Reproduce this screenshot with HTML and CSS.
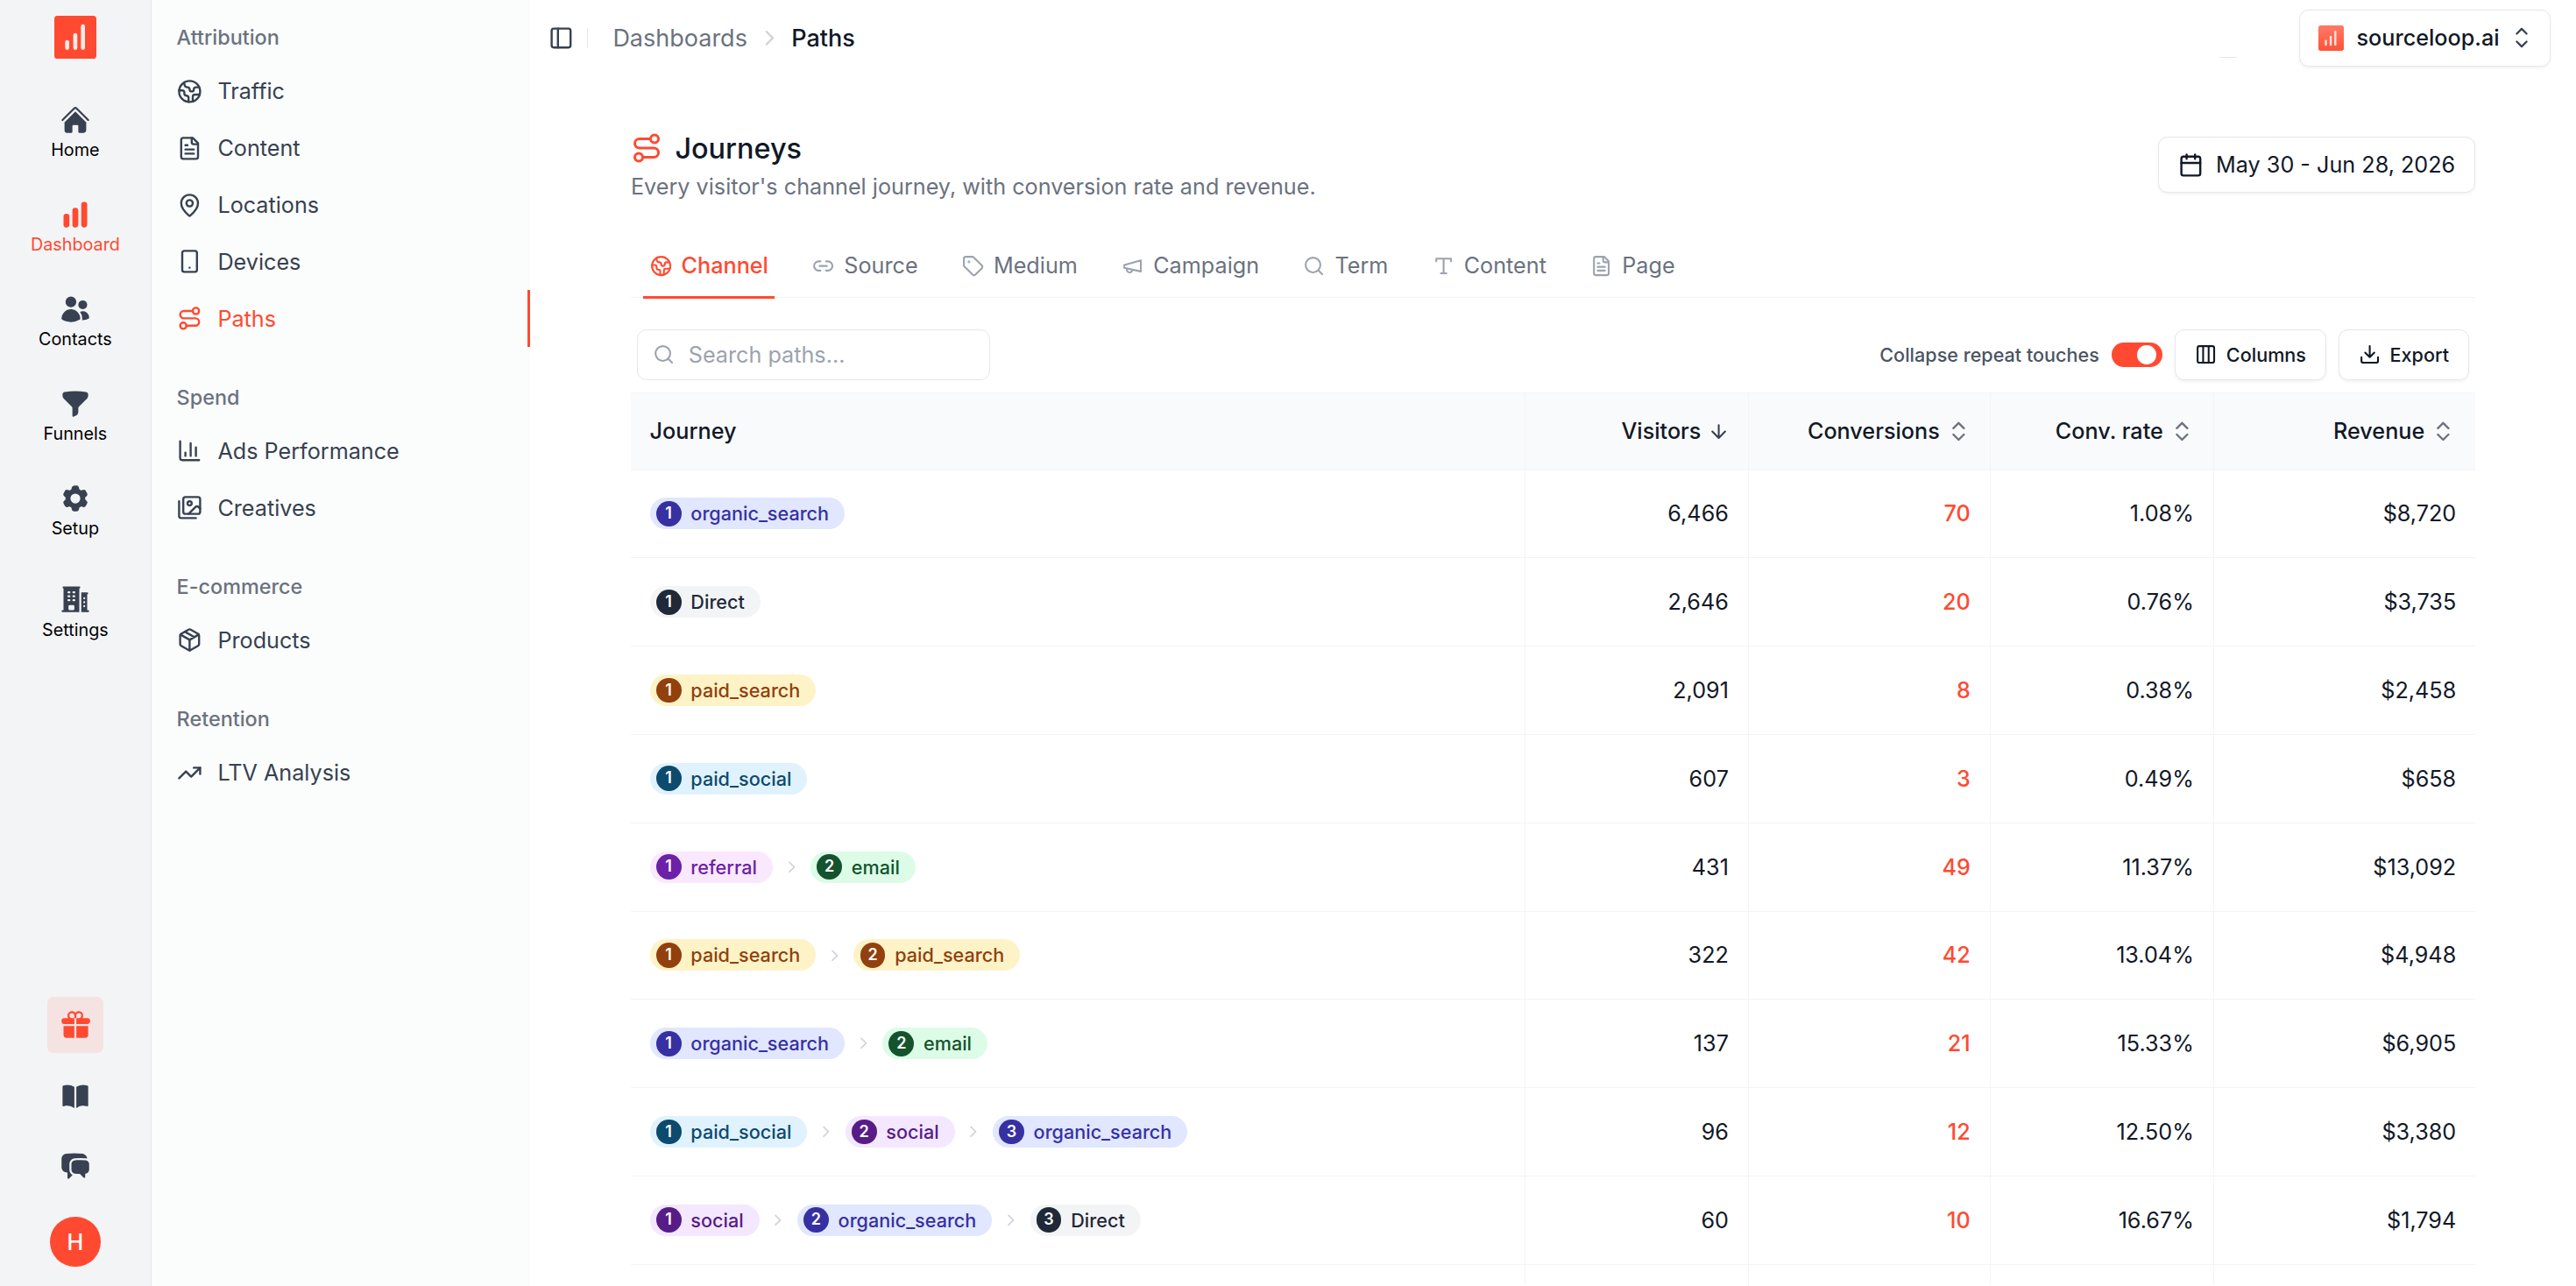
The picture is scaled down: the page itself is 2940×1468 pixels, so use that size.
FILE: index.html
```html
<!DOCTYPE html>
<html lang="en">
<head>
<meta charset="utf-8">
<title>Journeys</title>
<link rel="stylesheet" href="styles.css">
</head>
<body>
<svg class="sprite" aria-hidden="true">
  <symbol id="bars" viewBox="0 0 24 24"><path d="M18.375 2.25c-1.035 0-1.875.84-1.875 1.875v15.75c0 1.035.84 1.875 1.875 1.875h.75c1.035 0 1.875-.84 1.875-1.875V4.125c0-1.036-.84-1.875-1.875-1.875h-.75ZM9.75 8.625c0-1.036.84-1.875 1.875-1.875h.75c1.036 0 1.875.84 1.875 1.875v11.25c0 1.035-.84 1.875-1.875 1.875h-.75a1.875 1.875 0 0 1-1.875-1.875V8.625ZM3 13.125c0-1.036.84-1.875 1.875-1.875h.75c1.036 0 1.875.84 1.875 1.875v6.75c0 1.035-.84 1.875-1.875 1.875h-.75A1.875 1.875 0 0 1 3 19.875v-6.75Z"/></symbol>
  <symbol id="home" viewBox="0 0 24 24"><path d="M11.47 3.841a.75.75 0 0 1 1.06 0l8.69 8.69a.75.75 0 1 0 1.06-1.061l-8.689-8.69a2.25 2.25 0 0 0-3.182 0l-8.69 8.69a.75.75 0 1 0 1.061 1.06l8.69-8.689Z"/><path d="m12 5.432 8.159 8.159c.03.03.06.058.091.086v6.198c0 1.035-.84 1.875-1.875 1.875H15a.75.75 0 0 1-.75-.75v-4.5a.75.75 0 0 0-.75-.75h-3a.75.75 0 0 0-.75.75V21a.75.75 0 0 1-.75.75H5.625a1.875 1.875 0 0 1-1.875-1.875v-6.198a2.29 2.29 0 0 0 .091-.086L12 5.432Z"/></symbol>
  <symbol id="users" viewBox="0 0 24 24"><path d="M4.500 6.375a4.125 4.125 0 1 1 8.250 0 4.125 4.125 0 0 1-8.250 0ZM14.250 8.625a3.375 3.375 0 1 1 6.750 0 3.375 3.375 0 0 1-6.750 0ZM1.500 19.125a7.125 7.125 0 0 1 14.250 0v.003l-.001.119a.75.75 0 0 1-.363.630 13.067 13.067 0 0 1-6.761 1.873c-2.472 0-4.786-.684-6.760-1.873a.75.75 0 0 1-.364-.630l-.001-.122ZM17.250 19.128l-.001.144a2.250 2.250 0 0 1-.233.960 10.088 10.088 0 0 0 5.060-1.010.75.75 0 0 0 .420-.643 4.875 4.875 0 0 0-6.957-4.611 8.586 8.586 0 0 1 1.710 5.157v.003Z"/></symbol>
  <symbol id="funnel" viewBox="0 0 24 24"><path fill-rule="evenodd" d="M3.792 2.938A49.069 49.069 0 0 1 12 2.250c2.797 0 5.540.236 8.209.688a1.857 1.857 0 0 1 1.541 1.836v1.044a3 3 0 0 1-.879 2.121l-6.182 6.182a1.500 1.500 0 0 0-.439 1.061v2.927a3 3 0 0 1-1.658 2.684l-1.757.878A.75.75 0 0 1 9.750 21v-5.818a1.500 1.500 0 0 0-.440-1.060L3.130 7.938a3 3 0 0 1-.879-2.121V4.774c0-.897.640-1.683 1.542-1.836Z"/></symbol>
  <symbol id="cog" viewBox="0 0 24 24"><path fill-rule="evenodd" d="M11.078 2.250c-.917 0-1.699.663-1.850 1.567L9.050 4.889c-.020.120-.115.260-.297.348a7.493 7.493 0 0 0-.986.570c-.166.115-.334.126-.450.083L6.300 5.508a1.875 1.875 0 0 0-2.282.819l-.922 1.597a1.875 1.875 0 0 0 .432 2.385l.840.692c.095.078.170.229.154.430a7.598 7.598 0 0 0 0 1.139c.015.200-.059.352-.153.430l-.841.692a1.875 1.875 0 0 0-.432 2.385l.922 1.597a1.875 1.875 0 0 0 2.282.818l1.019-.382c.115-.043.283-.031.450.082.312.214.641.405.985.570.182.088.277.228.297.350l.178 1.071c.151.904.933 1.567 1.850 1.567h1.844c.916 0 1.699-.663 1.850-1.567l.178-1.072c.020-.120.114-.260.297-.349.344-.165.673-.356.985-.570.167-.114.335-.125.450-.082l1.020.382a1.875 1.875 0 0 0 2.280-.819l.923-1.597a1.875 1.875 0 0 0-.432-2.385l-.840-.692c-.095-.078-.170-.229-.154-.430a7.614 7.614 0 0 0 0-1.139c-.016-.200.059-.352.153-.430l.840-.692c.708-.582.891-1.590.433-2.385l-.922-1.597a1.875 1.875 0 0 0-2.282-.818l-1.020.382c-.114.043-.282.031-.449-.083a7.490 7.490 0 0 0-.985-.570c-.183-.087-.277-.227-.297-.348l-.179-1.072a1.875 1.875 0 0 0-1.850-1.567h-1.843ZM12 15.750a3.750 3.750 0 1 0 0-7.500 3.750 3.750 0 0 0 0 7.500Z"/></symbol>
  <symbol id="building" viewBox="0 0 24 24"><path fill-rule="evenodd" d="M3 2.250a.75.75 0 0 0 0 1.500v16.500h-.75a.75.75 0 0 0 0 1.500H15v-18a.75.75 0 0 0 0-1.500H3ZM6.750 19.500v-2.250a.75.75 0 0 1 .75-.75h3a.75.75 0 0 1 .75.75v2.250a.75.75 0 0 1-.75.75h-3a.75.75 0 0 1-.75-.75ZM6 6.750A.75.75 0 0 1 6.750 6h.75a.75.75 0 0 1 0 1.500h-.75A.75.75 0 0 1 6 6.750ZM6.750 9a.75.75 0 0 0 0 1.500h.75a.75.75 0 0 0 0-1.500h-.75ZM6 12.750a.75.75 0 0 1 .75-.75h.75a.75.75 0 0 1 0 1.500h-.75a.75.75 0 0 1-.75-.75ZM10.500 6a.75.75 0 0 0 0 1.500h.75a.75.75 0 0 0 0-1.500h-.75Zm-.75 3.750A.75.75 0 0 1 10.500 9h.75a.75.75 0 0 1 0 1.500h-.75a.75.75 0 0 1-.75-.75ZM10.500 12a.75.75 0 0 0 0 1.500h.75a.75.75 0 0 0 0-1.500h-.75ZM16.500 6.750v15h5.250a.75.75 0 0 0 0-1.500H21v-12a.75.75 0 0 0 0-1.500h-4.500Zm1.500 4.500a.75.75 0 0 1 .75-.75h.008a.75.75 0 0 1 .75.75v.008a.75.75 0 0 1-.75.75h-.008a.75.75 0 0 1-.75-.75v-.008Zm.75 2.250a.75.75 0 0 0-.75.75v.008c0 .414.336.75.75.75h.008a.75.75 0 0 0 .75-.75v-.008a.75.75 0 0 0-.75-.75h-.008ZM18 17.250a.75.75 0 0 1 .75-.75h.008a.75.75 0 0 1 .75.75v.008a.75.75 0 0 1-.75.75h-.008a.75.75 0 0 1-.75-.75v-.008Z"/></symbol>
  <symbol id="gift" viewBox="0 0 24 24"><path d="M9.375 3a1.875 1.875 0 0 0 0 3.750h1.875v4.500H3.375A1.875 1.875 0 0 1 1.500 9.375v-.75c0-1.036.840-1.875 1.875-1.875h3.193A3.375 3.375 0 0 1 12 2.753a3.375 3.375 0 0 1 5.432 3.997h3.943c1.035 0 1.875.840 1.875 1.875v.75c0 1.036-.840 1.875-1.875 1.875H12.750v-4.500h1.875a1.875 1.875 0 1 0-1.875-1.875V6.750h-1.500V4.875C11.250 3.839 10.410 3 9.375 3ZM11.250 12.750H3v6.750a2.250 2.250 0 0 0 2.250 2.250h6v-9ZM12.750 12.750v9h6.750a2.250 2.250 0 0 0 2.250-2.250v-6.750h-9Z"/></symbol>
  <symbol id="book" viewBox="0 0 24 24"><path d="M11.250 4.533A9.707 9.707 0 0 0 6 3a9.735 9.735 0 0 0-3.250.555.75.75 0 0 0-.500.707v14.250a.75.75 0 0 0 1 .707A8.237 8.237 0 0 1 6 18.750c1.995 0 3.823.707 5.250 1.886V4.533ZM12.750 20.636A8.214 8.214 0 0 1 18 18.750c.966 0 1.890.166 2.750.470a.75.75 0 0 0 1-.708V4.262a.75.75 0 0 0-.500-.707A9.735 9.735 0 0 0 18 3a9.707 9.707 0 0 0-5.250 1.533v16.103Z"/></symbol>
  <symbol id="chat" viewBox="0 0 24 24"><path d="M4.913 2.658c2.075-.27 4.19-.408 6.337-.408 2.147 0 4.262.139 6.337.408 1.922.25 3.291 1.861 3.405 3.727a4.403 4.403 0 0 0-1.032-.211 50.89 50.89 0 0 0-8.42 0c-2.358.196-4.04 2.19-4.04 4.434v4.286a4.47 4.47 0 0 0 2.433 3.984L7.28 21.53A.75.75 0 0 1 6 21v-4.03a48.527 48.527 0 0 1-1.087-.128C2.905 16.58 1.5 14.833 1.5 12.862V6.638c0-1.97 1.405-3.718 3.413-3.979Z"/><path d="M15.75 7.5c-1.376 0-2.739.057-4.086.169C10.124 7.797 9 9.103 9 10.609v4.285c0 1.507 1.128 2.814 2.67 2.94 1.243.102 2.5.157 3.768.165l2.782 2.781a.75.75 0 0 0 1.28-.53v-2.39l.33-.026c1.542-.125 2.67-1.433 2.67-2.94v-4.286c0-1.505-1.125-2.811-2.664-2.94A49.392 49.392 0 0 0 15.75 7.5Z"/></symbol>
  <symbol id="earth" viewBox="0 0 24 24"><g class="ln"><path d="M21.540 15H17a2 2 0 0 0-2 2v4.540"/><path d="M7 3.340V5a3 3 0 0 0 3 3a2 2 0 0 1 2 2c0 1.100.9 2 2 2a2 2 0 0 0 2-2c0-1.100.9-2 2-2h3.170"/><path d="M11 21.950V18a2 2 0 0 0-2-2a2 2 0 0 1-2-2v-1a2 2 0 0 0-2-2H2.050"/><circle cx="12" cy="12" r="10"/></g></symbol>
  <symbol id="file" viewBox="0 0 24 24"><g class="ln"><path d="M15 2H6a2 2 0 0 0-2 2v16a2 2 0 0 0 2 2h12a2 2 0 0 0 2-2V7Z"/><path d="M14 2v4a2 2 0 0 0 2 2h4M10 9H8M16 13H8M16 17H8"/></g></symbol>
  <symbol id="pin" viewBox="0 0 24 24"><g class="ln"><path d="M20 10c0 4.993-5.539 10.193-7.399 11.799a1 1 0 0 1-1.202 0C9.539 20.193 4 14.993 4 10a8 8 0 0 1 16 0"/><circle cx="12" cy="10" r="3"/></g></symbol>
  <symbol id="device" viewBox="0 0 24 24"><g class="ln"><rect x="5" y="2" width="14" height="20" rx="2"/><path d="M12 18h.01"/></g></symbol>
  <symbol id="route" viewBox="0 0 24 24"><g class="ln"><circle cx="6" cy="19" r="3"/><path d="M9 19h8.500a3.500 3.500 0 0 0 0-7h-11a3.500 3.500 0 0 1 0-7H15"/><circle cx="18" cy="5" r="3"/></g></symbol>
  <symbol id="chart" viewBox="0 0 24 24"><g class="ln"><path d="M3 3v16a2 2 0 0 0 2 2h16M18 17V9M13 17V5M8 17v-3"/></g></symbol>
  <symbol id="images" viewBox="0 0 24 24"><g class="ln"><path d="M18 22H4a2 2 0 0 1-2-2V6"/><path d="m22 13-1.296-1.296a2.410 2.410 0 0 0-3.408 0L11 18"/><circle cx="12" cy="8" r="2"/><rect width="16" height="16" x="6" y="2" rx="2"/></g></symbol>
  <symbol id="package" viewBox="0 0 24 24"><g class="ln"><path d="M11 21.730a2 2 0 0 0 2 0l7-4A2 2 0 0 0 21 16V8a2 2 0 0 0-1-1.730l-7-4a2 2 0 0 0-2 0l-7 4A2 2 0 0 0 3 8v8a2 2 0 0 0 1 1.730z"/><path d="M12 22V12"/><path d="M3.290 7 12 12l8.710-5M7.500 4.270l9 5.150"/></g></symbol>
  <symbol id="trend" viewBox="0 0 24 24"><g class="ln"><path d="M16 7h6v6"/><path d="m22 7-8.500 8.500-5-5L2 17"/></g></symbol>
  <symbol id="panel" viewBox="0 0 24 24"><g class="ln"><rect width="18" height="18" x="3" y="3" rx="2"/><path d="M9 3v18"/></g></symbol>
  <symbol id="right" viewBox="0 0 24 24"><g class="ln"><path d="m9 18 6-6-6-6"/></g></symbol>
  <symbol id="select" viewBox="0 0 24 24"><g class="ln"><path d="M8.250 15 12 18.750 15.750 15M8.250 9 12 5.250 15.750 9"/></g></symbol>
  <symbol id="sort" viewBox="0 0 24 24"><g class="ln"><path d="m7 15 5 5 5-5M7 9l5-5 5 5"/></g></symbol>
  <symbol id="down" viewBox="0 0 24 24"><g class="ln"><path d="M12 5v14M19 12l-7 7-7-7"/></g></symbol>
  <symbol id="calendar" viewBox="0 0 24 24"><g class="ln"><path d="M8 2v4M16 2v4"/><rect width="18" height="18" x="3" y="4" rx="2"/><path d="M3 10h18"/></g></symbol>
  <symbol id="link" viewBox="0 0 24 24"><g class="ln"><path d="M9 17H7A5 5 0 0 1 7 7h2M15 7h2a5 5 0 1 1 0 10h-2M8 12h8"/></g></symbol>
  <symbol id="tag" viewBox="0 0 24 24"><g class="ln"><path d="M12.586 2.586A2 2 0 0 0 11.172 2H4a2 2 0 0 0-2 2v7.172a2 2 0 0 0 .586 1.414l8.704 8.704a2.426 2.426 0 0 0 3.420 0l6.580-6.580a2.426 2.426 0 0 0 0-3.420z"/><circle cx="7.500" cy="7.500" r=".5" fill="currentColor"/></g></symbol>
  <symbol id="megaphone" viewBox="0 0 24 24"><g class="ln"><path d="m3 11 18-5v12L3 14v-3zM11.600 16.800a3 3 0 1 1-5.800-1.600"/></g></symbol>
  <symbol id="search" viewBox="0 0 24 24"><g class="ln"><circle cx="11" cy="11" r="8"/><path d="m21 21-4.300-4.300"/></g></symbol>
  <symbol id="type" viewBox="0 0 24 24"><g class="ln"><path d="M4 7V4h16v3M9 20h6M12 4v16"/></g></symbol>
  <symbol id="columns" viewBox="0 0 24 24"><g class="ln"><rect width="18" height="18" x="3" y="3" rx="2"/><path d="M9 3v18M15 3v18"/></g></symbol>
  <symbol id="download" viewBox="0 0 24 24"><g class="ln"><path d="M12 15V3M21 15v4a2 2 0 0 1-2 2H5a2 2 0 0 1-2-2v-4M7 10l5 5 5-5"/></g></symbol>
</svg>

<div class="app">
  <nav class="rail">
    <div class="logo"><svg viewBox="0 0 27 27"><rect x="6.900" y="15.500" width="2.600" height="6.300" rx="1.300"/><rect x="12.100" y="11.100" width="2.600" height="10.700" rx="1.300"/><rect x="17" y="5.500" width="2.600" height="16.300" rx="1.300"/></svg></div>
    <a class="rail-item"><svg><use href="#home"/></svg><span>Home</span></a>
    <a class="rail-item active"><svg><use href="#bars"/></svg><span>Dashboard</span></a>
    <a class="rail-item"><svg><use href="#users"/></svg><span>Contacts</span></a>
    <a class="rail-item"><svg><use href="#funnel"/></svg><span>Funnels</span></a>
    <a class="rail-item"><svg><use href="#cog"/></svg><span>Setup</span></a>
    <a class="rail-item last"><svg><use href="#building"/></svg><span>Settings</span></a>
    <div class="rail-bottom">
      <a class="gift"><svg><use href="#gift"/></svg></a>
      <a class="rail-icon"><svg><use href="#book"/></svg></a>
      <a class="rail-icon"><svg><use href="#chat"/></svg></a>
      <div class="avatar">H</div>
    </div>
  </nav>

  <aside class="sidebar">
    <section>
      <h3>Attribution</h3>
      <a><svg><use href="#earth"/></svg>Traffic</a>
      <a><svg><use href="#file"/></svg>Content</a>
      <a><svg><use href="#pin"/></svg>Locations</a>
      <a><svg><use href="#device"/></svg>Devices</a>
      <a class="active"><svg><use href="#route"/></svg>Paths</a>
    </section>
    <section>
      <h3>Spend</h3>
      <a><svg><use href="#chart"/></svg>Ads Performance</a>
      <a><svg><use href="#images"/></svg>Creatives</a>
    </section>
    <section>
      <h3>E-commerce</h3>
      <a><svg><use href="#package"/></svg>Products</a>
    </section>
    <section>
      <h3>Retention</h3>
      <a><svg><use href="#trend"/></svg>LTV Analysis</a>
    </section>
  </aside>

  <main>
    <header class="topbar">
      <svg class="panel"><use href="#panel"/></svg>
      <i class="divider"></i>
      <span class="crumb">Dashboards</span>
      <svg class="crumb-sep"><use href="#right"/></svg>
      <span class="crumb current">Paths</span>
      <button class="site">
        <span class="site-logo"><svg viewBox="0 0 27 27"><rect x="6.900" y="15.500" width="2.200" height="6.300" rx="1.100"/><rect x="12.100" y="11.100" width="2.200" height="10.700" rx="1.100"/><rect x="17" y="5.500" width="2.200" height="16.300" rx="1.100"/></svg></span>
        <span>sourceloop.ai</span>
        <svg class="select"><use href="#select"/></svg>
      </button>
      <i class="dash"></i>
    </header>

    <div class="content">
      <div class="heading">
        <div>
          <h1><svg><use href="#route"/></svg>Journeys</h1>
          <p>Every visitor's channel journey, with conversion rate and revenue.</p>
        </div>
        <button class="date"><svg><use href="#calendar"/></svg>May 30 - Jun 28, 2026</button>
      </div>

      <div class="tabs">
        <a class="active"><svg><use href="#earth"/></svg>Channel</a>
        <a><svg><use href="#link"/></svg>Source</a>
        <a><svg><use href="#tag"/></svg>Medium</a>
        <a><svg><use href="#megaphone"/></svg>Campaign</a>
        <a><svg><use href="#search"/></svg>Term</a>
        <a><svg><use href="#type"/></svg>Content</a>
        <a><svg><use href="#file"/></svg>Page</a>
      </div>

      <div class="toolbar">
        <div class="search"><svg><use href="#search"/></svg><span>Search paths...</span></div>
        <span class="toggle-label">Collapse repeat touches</span>
        <span class="toggle"><i></i></span>
        <button class="small"><svg><use href="#columns"/></svg>Columns</button>
        <button class="small"><svg><use href="#download"/></svg>Export</button>
      </div>

      <div class="table">
        <div class="row head">
          <div>Journey</div>
          <div>Visitors<svg class="sorted"><use href="#down"/></svg></div>
          <div>Conversions<svg><use href="#sort"/></svg></div>
          <div>Conv. rate<svg><use href="#sort"/></svg></div>
          <div>Revenue<svg><use href="#sort"/></svg></div>
        </div>
        <div class="row">
          <div><span class="pill organic"><b>1</b>organic_search</span></div>
          <div>6,466</div><div>70</div><div>1.08%</div><div>$8,720</div>
        </div>
        <div class="row">
          <div><span class="pill direct"><b>1</b>Direct</span></div>
          <div>2,646</div><div>20</div><div>0.76%</div><div>$3,735</div>
        </div>
        <div class="row">
          <div><span class="pill paid"><b>1</b>paid_search</span></div>
          <div>2,091</div><div>8</div><div>0.38%</div><div>$2,458</div>
        </div>
        <div class="row">
          <div><span class="pill paid-social"><b>1</b>paid_social</span></div>
          <div>607</div><div>3</div><div>0.49%</div><div>$658</div>
        </div>
        <div class="row">
          <div><span class="pill referral"><b>1</b>referral</span><svg><use href="#right"/></svg><span class="pill email"><b>2</b>email</span></div>
          <div>431</div><div>49</div><div>11.37%</div><div>$13,092</div>
        </div>
        <div class="row">
          <div><span class="pill paid"><b>1</b>paid_search</span><svg><use href="#right"/></svg><span class="pill paid"><b>2</b>paid_search</span></div>
          <div>322</div><div>42</div><div>13.04%</div><div>$4,948</div>
        </div>
        <div class="row">
          <div><span class="pill organic"><b>1</b>organic_search</span><svg><use href="#right"/></svg><span class="pill email"><b>2</b>email</span></div>
          <div>137</div><div>21</div><div>15.33%</div><div>$6,905</div>
        </div>
        <div class="row">
          <div><span class="pill paid-social"><b>1</b>paid_social</span><svg><use href="#right"/></svg><span class="pill social"><b>2</b>social</span><svg><use href="#right"/></svg><span class="pill organic"><b>3</b>organic_search</span></div>
          <div>96</div><div>12</div><div>12.50%</div><div>$3,380</div>
        </div>
        <div class="row">
          <div><span class="pill social"><b>1</b>social</span><svg><use href="#right"/></svg><span class="pill organic"><b>2</b>organic_search</span><svg><use href="#right"/></svg><span class="pill direct"><b>3</b>Direct</span></div>
          <div>60</div><div>10</div><div>16.67%</div><div>$1,794</div>
        </div>
        <div class="row partial"><div></div><div></div><div></div><div></div><div></div></div>
      </div>
    </div>
  </main>
</div>
</body>
</html>
```
FILE: styles.css
```css
/* 1rem equals ten layout units */
html { font-size: 18px; height: 100%; }
* { box-sizing: border-box; }
body {
  margin: 0; height: 100%; overflow: hidden;
  font-family: Inter, "Liberation Sans", sans-serif;
  font-size: 1.4rem; color: #111827; background: #fff;
}
svg { fill: currentColor; flex: none; display: block; }
.sprite { position: absolute; width: 0; height: 0; }
.ln { fill: none; stroke: currentColor; stroke-width: var(--sw, 2); stroke-linecap: round; stroke-linejoin: round; }
button { font: inherit; color: inherit; background: #fff; }
.app { display: flex; height: 100%; overflow: hidden; }

/* icon rail */
.rail {
  width: 9.600rem; flex: none; background: #f3f4f6; border-right: 1px solid #e5e7eb;
  display: flex; flex-direction: column; align-items: center; padding-top: 1.020rem;
}
.logo { width: 2.680rem; height: 2.680rem; background: #ff4a31; border-radius: .2rem; margin-bottom: 2.900rem; }
.logo svg { fill: #ffeae6; width: 100%; height: 100%; }
.rail-item {
  height: 3.750rem; margin-bottom: 2.250rem; font-size: 1.100rem; line-height: 1.600rem; color: #000;
  display: flex; flex-direction: column; align-items: center; justify-content: space-between;
}
.rail-item svg { width: 2rem; height: 2rem; color: #374151; }
.rail-item.active, .rail-item.active svg { color: #ff4a31; }
.rail-item.last { margin-top: .4rem; }
.rail-bottom { margin-top: auto; display: flex; flex-direction: column; align-items: center; color: #374151; padding-bottom: 1.200rem; }
.rail-bottom svg { width: 2rem; height: 2rem; }
.gift { width: 3.600rem; height: 3.600rem; border-radius: .4rem; background: #f5e3e2; color: #ff4a31; display: grid; place-items: center; margin-bottom: 1.760rem; }
.rail-icon { height: 2rem; margin-bottom: 2.400rem; }
.avatar { width: 3.200rem; height: 3.200rem; border-radius: 50%; background: #ff4a31; color: #fff; font-weight: 500; display: grid; place-items: center; margin-top: -.200rem; }

/* section sidebar */
.sidebar { width: 24rem; flex: none; background: #fbfdfc; padding-top: .8rem; }
.sidebar section { margin-bottom: 1.600rem; }
.sidebar h3 { margin: 0; padding-left: 1.600rem; height: 3.200rem; line-height: 3.200rem; font-size: 1.300rem; font-weight: 500; color: #6b7280; }
.sidebar a { display: flex; align-items: center; gap: 1rem; height: 3.600rem; padding-left: 1.600rem; color: #374151; }
.sidebar svg { width: 1.600rem; height: 1.600rem; }
.sidebar .active { color: #ff4a31; border-right: .2rem solid #ff4a31; }

/* top bar */
main { flex: 1; min-width: 0; overflow: hidden; }
.topbar { position: relative; height: 4.800rem; padding: 0 1.600rem 0 1.200rem; display: flex; align-items: center; }
.panel { width: 1.600rem; height: 1.600rem; color: #374151; }
.divider { width: 1px; height: 1.200rem; background: #e5e7eb; margin: 0 1.600rem 0 .8rem; }
.crumb { color: #6b7280; font-size: 1.500rem; }
.crumb.current { color: #111827; font-weight: 500; }
.crumb-sep { width: 1.600rem; height: 1.600rem; margin: 0 .6rem; color: #d1d5db; }
.site {
  margin-left: auto; height: 3.600rem; padding: 0 .8rem 0 1.200rem; display: flex; align-items: center; font-weight: 500;
  border: 1px solid #e5e7eb; border-radius: .6rem; box-shadow: 0 .1rem .2rem rgba(0,0,0,.05);
}
.site-logo { width: 1.600rem; height: 1.600rem; border-radius: .15rem; background: linear-gradient(#ff7a66, #ff5238); margin-right: .8rem; }
.site-logo svg { width: 100%; height: 100%; fill: #ffe4df; }
.select { width: 2rem; height: 2rem; margin-left: .4rem; color: #374151; --sw: 1.500; }
.dash { position: absolute; right: 21.500rem; top: 3.600rem; width: 1.100rem; height: 1px; background: #e5e7eb; }

/* page heading */
.content { padding: 0 6.400rem; }
.heading { display: flex; justify-content: space-between; padding-top: 3.200rem; height: 9.600rem; }
h1 { margin: 0; display: flex; align-items: center; gap: .8rem; height: 2.800rem; font-size: 1.800rem; font-weight: 500; }
h1 svg { width: 2rem; height: 2rem; color: #ff4a31; }
.heading p { margin: .05rem 0 0; line-height: 2rem; color: #6b7280; }
.date {
  margin-top: .65rem; height: 3.600rem; padding: 0 1.200rem; display: flex; align-items: center; gap: .8rem;
  border: 1px solid #e5e7eb; border-radius: .6rem; box-shadow: 0 .1rem .2rem rgba(0,0,0,.05);
}
.date svg { width: 1.600rem; height: 1.600rem; }

/* tabs */
.tabs { display: flex; align-items: flex-end; gap: 2rem; height: 4.500rem; padding: 0 .8rem; border-bottom: 1px solid #f1f2f4; color: #6b7280; }
.tabs a { display: flex; align-items: center; gap: .6rem; padding: 0 .4rem; height: 4rem; margin-bottom: -.1rem; border-bottom: .2rem solid transparent; }
.tabs svg { width: 1.400rem; height: 1.400rem; color: #9ca3af; }
.tabs .active, .tabs .active svg { color: #ff4a31; }
.tabs .active { border-color: #ff4a31; font-weight: 500; }

/* toolbar */
.toolbar { display: flex; align-items: center; gap: .8rem; height: 6rem; padding: 1.200rem .4rem 0; font-size: 1.200rem; font-weight: 500; }
.search {
  width: 22.400rem; height: 3.200rem; margin-right: auto; padding: 0 .95rem; display: flex; align-items: center; gap: .85rem;
  border: 1px solid #e5e7eb; border-radius: .6rem; color: #9ca3af; font-size: 1.400rem; font-weight: 400;
}
.search svg { width: 1.400rem; height: 1.400rem; }
.toggle-label { color: #4b5563; }
.toggle { width: 3.200rem; height: 1.600rem; border-radius: 1rem; background: #ff4a31; padding: .2rem 0 0 1.600rem; }
.toggle i { display: block; width: 1.200rem; height: 1.200rem; border-radius: 50%; background: #fff; }
.small {
  height: 3.200rem; padding: 0 1.200rem; display: flex; align-items: center; gap: .6rem;
  border: 1px solid #e5e7eb; border-radius: .6rem; box-shadow: 0 .1rem .2rem rgba(0,0,0,.05);
}
.small svg { width: 1.400rem; height: 1.400rem; }

/* journeys table */
.row { display: grid; grid-template-columns: 1fr 14.170rem 15.330rem 14.170rem 16.580rem; height: 5.600rem; border-bottom: 1px solid #f3f4f6; }
.row > div { display: flex; align-items: center; justify-content: flex-end; padding: 0 1.250rem; border-left: 1px solid #f3f4f6; }
.row > div:first-child { justify-content: flex-start; border-left: 0; padding: 0 1.200rem; }
.row > div:nth-child(3) { color: #ff4a31; font-weight: 500; }
.row > div:last-child { padding-right: 1.200rem; }
.row svg { width: 1.200rem; height: 1.200rem; margin: 0 .6rem; color: #d1d5db; }
.row.head { height: 4.910rem; background: #f9fafb; border-top: 1px solid #f3f4f6; font-weight: 500; }
.row.head > div { color: #111827; padding-right: 1.200rem; }
.row.head svg { width: 1.600rem; height: 1.600rem; margin: 0 0 0 .4rem; color: #6b7280; }
.row.head svg.sorted { width: 1.400rem; height: 1.400rem; color: #374151; }
.row.partial { height: 1.300rem; border-bottom: 0; }
.pill { display: flex; align-items: center; gap: .6rem; height: 2rem; padding: 0 1rem 0 .4rem; border-radius: 1rem; font-size: 1.200rem; font-weight: 500; background: var(--bg); color: var(--fg); }
.pill b { width: 1.600rem; height: 1.600rem; border-radius: 50%; background: var(--fg); color: #fff; font-size: 1rem; line-height: 1.600rem; font-weight: 600; text-align: center; }
.organic { --bg: #e0e7ff; --fg: #3730a3; }
.direct { --bg: #f3f4f6; --fg: #1f2937; }
.paid { --bg: #fef3c7; --fg: #92400e; }
.paid-social { --bg: #e0f2fe; --fg: #0c4a6e; }
.referral { --bg: #fae8ff; --fg: #6b21a8; }
.email { --bg: #dcfce7; --fg: #14532d; }
.social { --bg: #f3e8ff; --fg: #581c87; }
```
